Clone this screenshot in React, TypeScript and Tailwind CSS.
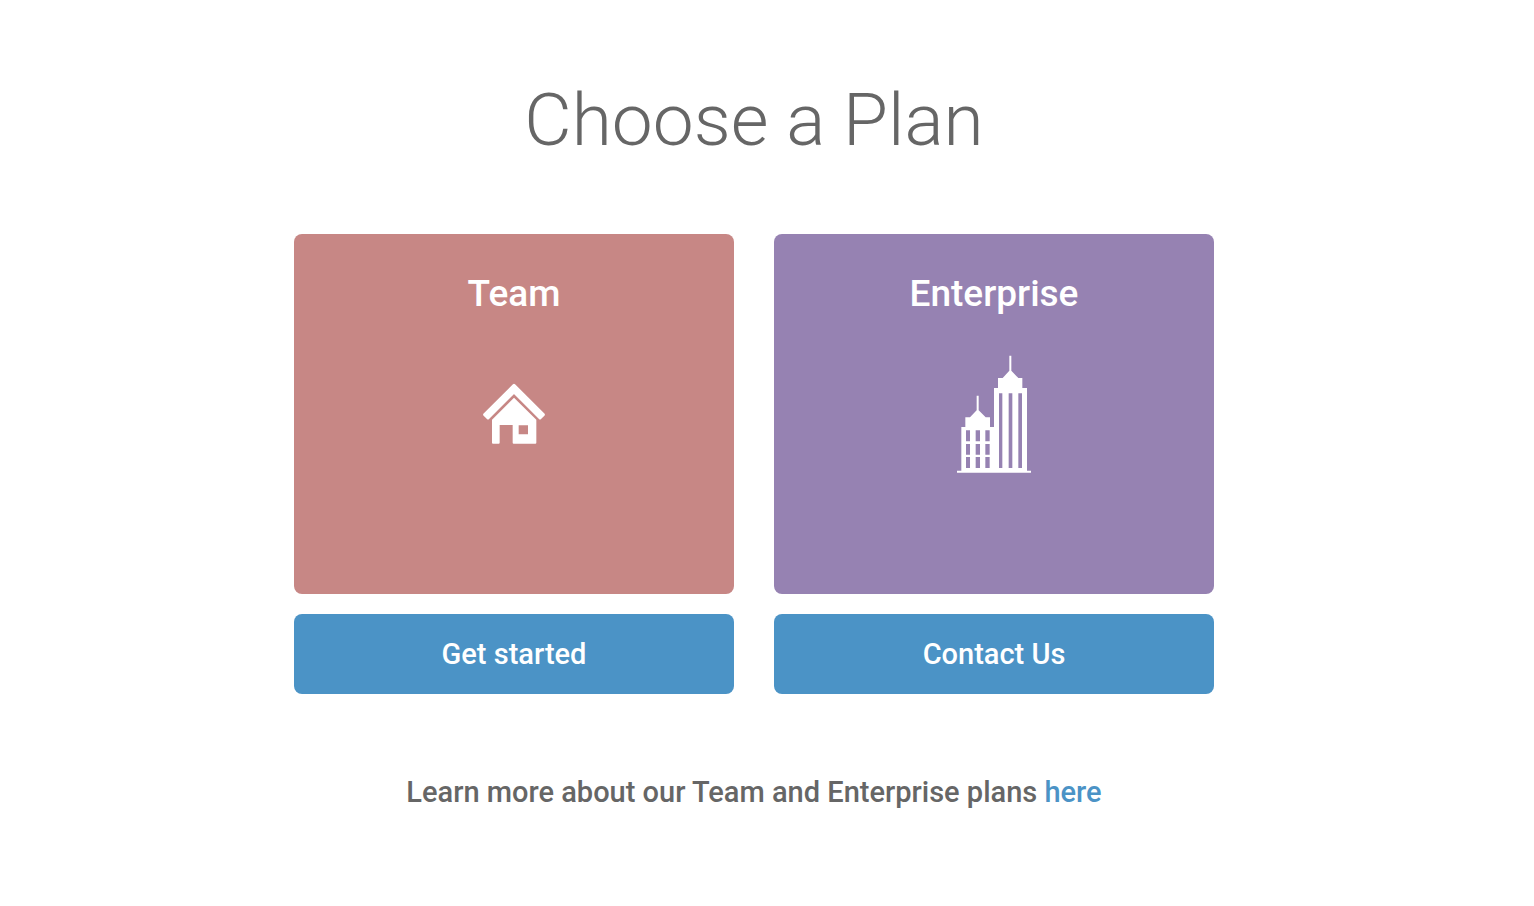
import { clsx } from "clsx"
import type { ReactNode } from "react"

interface Plan {
    name: string
    action: string
    color: string
    icon: ReactNode
}

const HouseIcon = () => (
    <svg viewBox="0 0 240 240" className="size-20" fill="#fff" aria-hidden="true">
        <path
            d="M120 34 32 122l10 10 78-78 78 78 10-10Z"
            stroke="#fff"
            strokeWidth="9"
            strokeLinejoin="round"
        />
        <path
            fillRule="evenodd"
            d="M120 71 187 137V206q0 3-3 3H119q-3 0-3-3V153H77V206q0 3-3 3H57q-3 0-3-3V137ZM134 154V181H162V154Z"
        />
    </svg>
)

const TowersIcon = () => (
    <svg viewBox="0 0 264 384" className="h-32 w-22" fill="#fff" aria-hidden="true">
        {/* low tower */}
        <path d="M80 137h6v44l21 21h13v29h13v133H34V231h12v-29h14l20-21Z" />
        {/* high tower */}
        <path d="M178 17h6v45l21 22h12v30h14v250h-99V114h12V84h14l20-22Z" />
        <path d="M21 362h222v6H21Z" />
        <g fill="#9682b2">
            <path d="M48 241h12v33H48ZM77 241h13v33H77ZM106 241h13v33h-13Z" />
            <path d="M48 282h12v32H48ZM77 282h13v32H77ZM106 282h13v32h-13Z" />
            <path d="M48 321h12v33H48ZM77 321h13v33H77ZM106 321h13v33h-13Z" />
            <path d="M147 130h10v224h-10ZM176 130h11v224h-11ZM205 130h11v224h-11Z" />
        </g>
    </svg>
)

const plans: Plan[] = [
    {
        name: "Team",
        action: "Get started",
        color: "bg-[#c78785]",
        icon: <HouseIcon />,
    },
    {
        name: "Enterprise",
        action: "Contact Us",
        color: "bg-[#9682b2]",
        icon: <TowersIcon />,
    },
]

const PlanCard = ({ plan }: { plan: Plan }) => {
    return (
        <div className="flex flex-col gap-5">
            {/* title and icon share one cell, so the icon stays in the card's centre */}
            <div className={clsx("grid min-h-90 rounded-lg", plan.color)}>
                <h2 className="[grid-area:1/1] pt-9 text-center text-[37px] leading-12 font-medium">
                    {plan.name}
                </h2>
                <div className="[grid-area:1/1] place-self-center">
                    {plan.icon}
                </div>
            </div>
            <button
                type="button"
                className="cursor-pointer rounded-lg bg-[#4b93c6] py-5 text-[29px] leading-10 font-medium"
            >
                {plan.action}
            </button>
        </div>
    )
}

const App = () => {
    return (
        <main className="min-h-screen bg-white pt-18 pr-[26px] pb-18 font-[Roboto,sans-serif] text-[#666]">
            <h1 className="text-center text-[73px] leading-24 font-light">
                Choose a Plan
            </h1>
            <div className="mx-auto mt-[66px] grid max-w-[920px] grid-cols-2 gap-10 text-white">
                {plans.map((plan) => (
                    <PlanCard key={plan.name} plan={plan} />
                ))}
            </div>
            <p className="mt-[78px] text-center text-[29px] leading-10 font-medium">
                Learn more about our Team and Enterprise plans{" "}
                <a href="#plans" className="text-[#4b93c6]">
                    here
                </a>
            </p>
        </main>
    )
}

export default App
